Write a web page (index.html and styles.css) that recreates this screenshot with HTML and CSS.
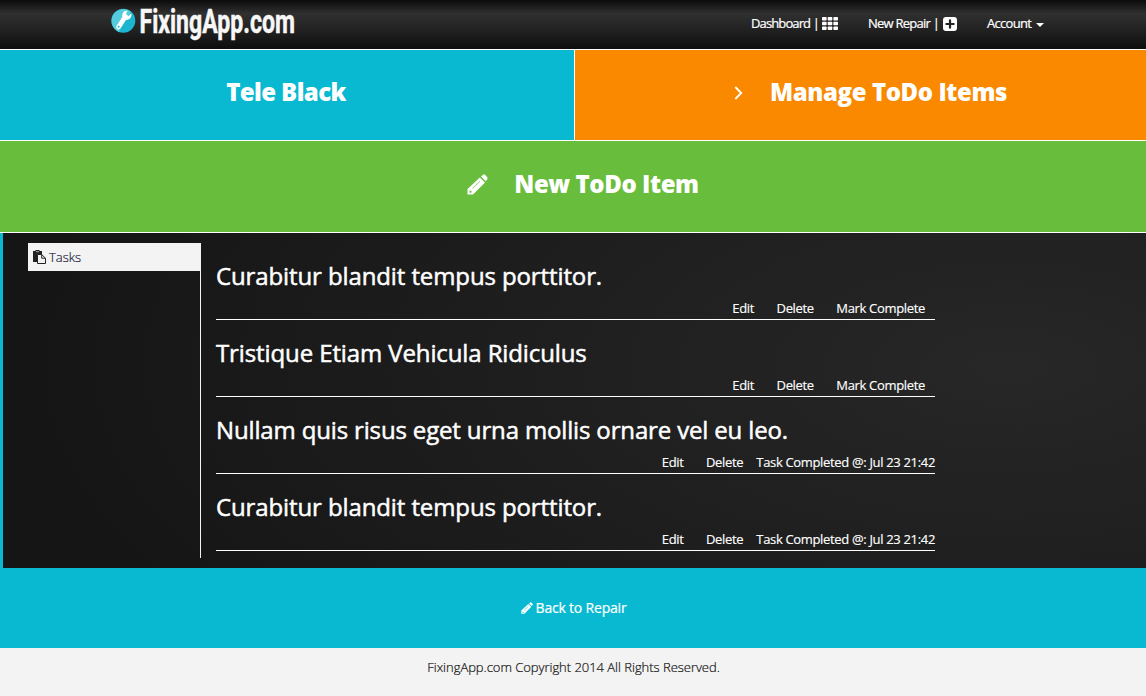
FILE: index.html
```
<!DOCTYPE html>
<html lang="en">
<head>
<meta charset="utf-8">
<title>FixingApp.com</title>
<link rel="stylesheet" href="styles.css">
</head>
<body>
<header class="navbar">
  <a class="brand">
    <svg width="196" height="49" viewBox="0 0 196 49">
      <circle cx="12.300" cy="20.800" r="12" fill="#1bb5d0"/>
      <path d="M4 12.500A12 12 0 0 1 20 11.500L8 32A12 12 0 0 1 4 12.500Z" fill="#55cbdd"/>
      <path d="M7.500 27L14.500 16.500" stroke="#fff" stroke-width="4.600" stroke-linecap="round"/>
      <path d="M16.500 10.500C12.500 10.500 10.300 14 11.700 17.500L15.500 20C19 20 21.300 16.500 20.200 13.300L17.300 16.300L14.700 14.600Z" fill="#fff"/>
      <circle cx="7.600" cy="26.800" r="1" fill="#1bb5d0"/>
      <text class="brand-text" x="28.500" y="33" textLength="155.500" lengthAdjust="spacingAndGlyphs">FixingApp.com</text>
    </svg>
  </a>
  <nav class="menu">
    <a class="menu-item dashboard"><span>Dashboard |</span>
      <svg width="16" height="13" viewBox="0 0 16 13" fill="#fff"><rect width="4.600" height="3.400" rx=".7"/><rect x="5.700" width="4.600" height="3.400" rx=".7"/><rect x="11.400" width="4.600" height="3.400" rx=".7"/><rect y="4.800" width="4.600" height="3.400" rx=".7"/><rect x="5.700" y="4.800" width="4.600" height="3.400" rx=".7"/><rect x="11.400" y="4.800" width="4.600" height="3.400" rx=".7"/><rect y="9.600" width="4.600" height="3.400" rx=".7"/><rect x="5.700" y="9.600" width="4.600" height="3.400" rx=".7"/><rect x="11.400" y="9.600" width="4.600" height="3.400" rx=".7"/></svg>
    </a>
    <a class="menu-item repair"><span>New Repair |</span>
      <svg width="14" height="14" viewBox="0 0 14 14"><rect width="14" height="14" rx="3" fill="#fff"/><path d="M7 2.500V11.500M2.500 7H11.500" stroke="#222" stroke-width="2.200"/></svg>
    </a>
    <a class="menu-item account"><span>Account</span><i class="caret"></i></a>
  </nav>
</header>
<section class="tiles">
  <a class="tile tile-cyan"><h2>Tele Black</h2></a>
  <a class="tile tile-orange">
    <svg width="9" height="14" viewBox="0 0 9 14"><path d="M1.300 1L7.200 7L1.300 13" fill="none" stroke="#fff" stroke-width="1.900"/></svg>
    <h2>Manage ToDo Items</h2>
  </a>
</section>
<a class="tile tile-green">
  <svg width="21" height="21" viewBox="0 0 21 21"><path d="M0.500 15L12.800 3.500L18 8.500L6 20.500H0.500Z M14 2.500L16 .7Q17 0 18 .8L20.300 3.200Q21 4.200 20.300 5.200L18.800 7.200Z" fill="#fff"/><path d="M5.500 14.500L13 7.200" stroke="#69bd3c" stroke-width=".7"/><path d="M2.700 16L4 17.300H5L4 18.700H2.500Z" fill="#69bd3c"/></svg>
  <h2>New ToDo Item</h2>
</a>
<main class="content">
  <aside class="sidebar">
    <a class="tab">
      <svg width="13" height="14" viewBox="0 0 13 14"><path d="M0 1H2.500V0H6.500V1H9V4H5.500Q4 4 4 5.500V12H0Z" fill="#222"/><path d="M3 1.700H6" stroke="#aaa"/><path d="M4.500 4.500H8.700L12.500 8.200V13.500H4.500ZM8.700 4.500V8.200H12.500" fill="#f3f3f3" stroke="#222"/></svg>
      <span>Tasks</span>
    </a>
  </aside>
  <div class="tasks">
    <article class="task"><h3 class="t1">Curabitur blandit tempus porttitor.</h3><div class="actions"><a class="edit">Edit</a><a class="delete">Delete</a><a class="mark">Mark Complete</a></div></article>
    <article class="task"><h3 class="t2">Tristique Etiam Vehicula Ridiculus</h3><div class="actions"><a class="edit">Edit</a><a class="delete">Delete</a><a class="mark">Mark Complete</a></div></article>
    <article class="task"><h3 class="t3">Nullam quis risus eget urna mollis ornare vel eu leo.</h3><div class="actions"><a class="edit">Edit</a><a class="delete">Delete</a><span class="done">Task Completed @: Jul 23 21:42</span></div></article>
    <article class="task"><h3 class="t1">Curabitur blandit tempus porttitor.</h3><div class="actions"><a class="edit">Edit</a><a class="delete">Delete</a><span class="done">Task Completed @: Jul 23 21:42</span></div></article>
  </div>
</main>
<a class="back">
  <svg width="12" height="12" viewBox="0 0 21 21"><path d="M0.500 15L12.800 3.500L18 8.500L6 20.500H0.500Z M14 2.500L16 .7Q17 0 18 .8L20.300 3.200Q21 4.200 20.300 5.200L18.800 7.200Z" fill="#fff"/><path d="M5.500 14.500L13 7.200" stroke="#08b9d1" stroke-width=".9"/><path d="M2.700 16L4 17.300H5L4 18.700H2.500Z" fill="#08b9d1"/></svg>
  <span>Back to Repair</span>
</a>
<footer class="footer">FixingApp.com Copyright 2014 All Rights Reserved.</footer>
</body>
</html>
```
FILE: styles.css
```
* { box-sizing: border-box; }
body { margin: 0; min-height: 696px; background: #f3f3f3; color: #fff; font: 13px/20px "Open Sans", sans-serif; }
h2, h3 { margin: 0; white-space: nowrap; }
svg { display: block; flex: none; }
span, .edit, .delete, .mark { white-space: nowrap; }
.navbar { display: flex; height: 50px; padding-left: 111px; border-bottom: 1px solid #fff; background: linear-gradient(#0b0b0b, #303030 28%, #222 60%, #0d0d0d); }
.brand { width: 196px; }
.brand svg { overflow: visible; }
.brand-text { font: 700 32.5px Roboto, sans-serif; fill: #f7f7f7; stroke: #f7f7f7; stroke-width: .5px; }
.menu { display: flex; margin-left: 444px; height: 47px; align-items: center; }
.menu-item { display: flex; align-items: center; -webkit-text-stroke: .2px; }
.menu-item span { margin-top: -1px; }
.dashboard { width: 117px; gap: 3px; letter-spacing: -.88px; }
.repair { width: 119px; gap: 4px; letter-spacing: -.75px; }
.account { gap: 5px; letter-spacing: -.7px; }
.caret { margin-top: 3px; border: 4px solid transparent; border-top-color: #fff; border-bottom: 0; }
.tiles { display: grid; grid-template-columns: 575px 1fr; height: 91px; border-bottom: 1px solid #fff; }
.tile { display: flex; justify-content: center; align-items: center; padding-bottom: 6px; }
.tile h2 { font-size: 24px; line-height: 30px; font-weight: 800; letter-spacing: -.42px; }
.tile-cyan { background: #08b9d1; border-right: 1px solid #fff; padding-right: 2px; }
.tile-cyan h2 { letter-spacing: -.6px; }
.tile-orange { background: #fa8900; gap: 27px; padding-left: 20px; }
.tile-orange svg { margin-top: 2px; }
.tile-green { background: #69bd3c; height: 92px; border-bottom: 1px solid #fff; gap: 26px; padding-left: 20px; }
.tile-green svg { margin-top: 2px; }
.content { display: flex; height: 335px; border-left: 3px solid #08b9d1; padding: 10px 0 0 25px; background: radial-gradient(ellipse 1000px 450px at 88% 40%, #272727, #151515); }
.sidebar { width: 173px; height: 315px; border-right: 1px solid #f3f3f3; }
.tab { display: flex; height: 28px; align-items: center; gap: 3px; padding-left: 5px; background: #f3f3f3; color: #20203a; font-weight: 300; -webkit-text-stroke: .2px; }
.tasks { width: 719px; margin-left: 15px; }
.task { height: 77px; padding-top: 15px; border-bottom: 1px solid #fff; }
.task h3 { font-size: 24px; line-height: 36px; font-weight: 400; letter-spacing: -.11px; -webkit-text-stroke: .5px; }
.task .t3 { letter-spacing: -.15px; }
.actions { display: flex; justify-content: flex-end; line-height: 20px; padding-top: 4px; letter-spacing: -.33px; -webkit-text-stroke: .15px; }
.edit { margin-right: 22.5px; }
.delete { margin-right: 22.5px; }
.mark { margin-right: 10px; }
.delete:has(+ .done) { margin-right: 13px; }
.back { display: flex; height: 80px; align-items: center; justify-content: center; gap: 3px; padding-left: 1px; background: #08b9d1; font-size: 14px; letter-spacing: -.2px; -webkit-text-stroke: .2px; }
.footer { padding: 9px 0 0 1px; text-align: center; color: #111; font-weight: 300; letter-spacing: -.03px; -webkit-text-stroke: .2px; }
```
